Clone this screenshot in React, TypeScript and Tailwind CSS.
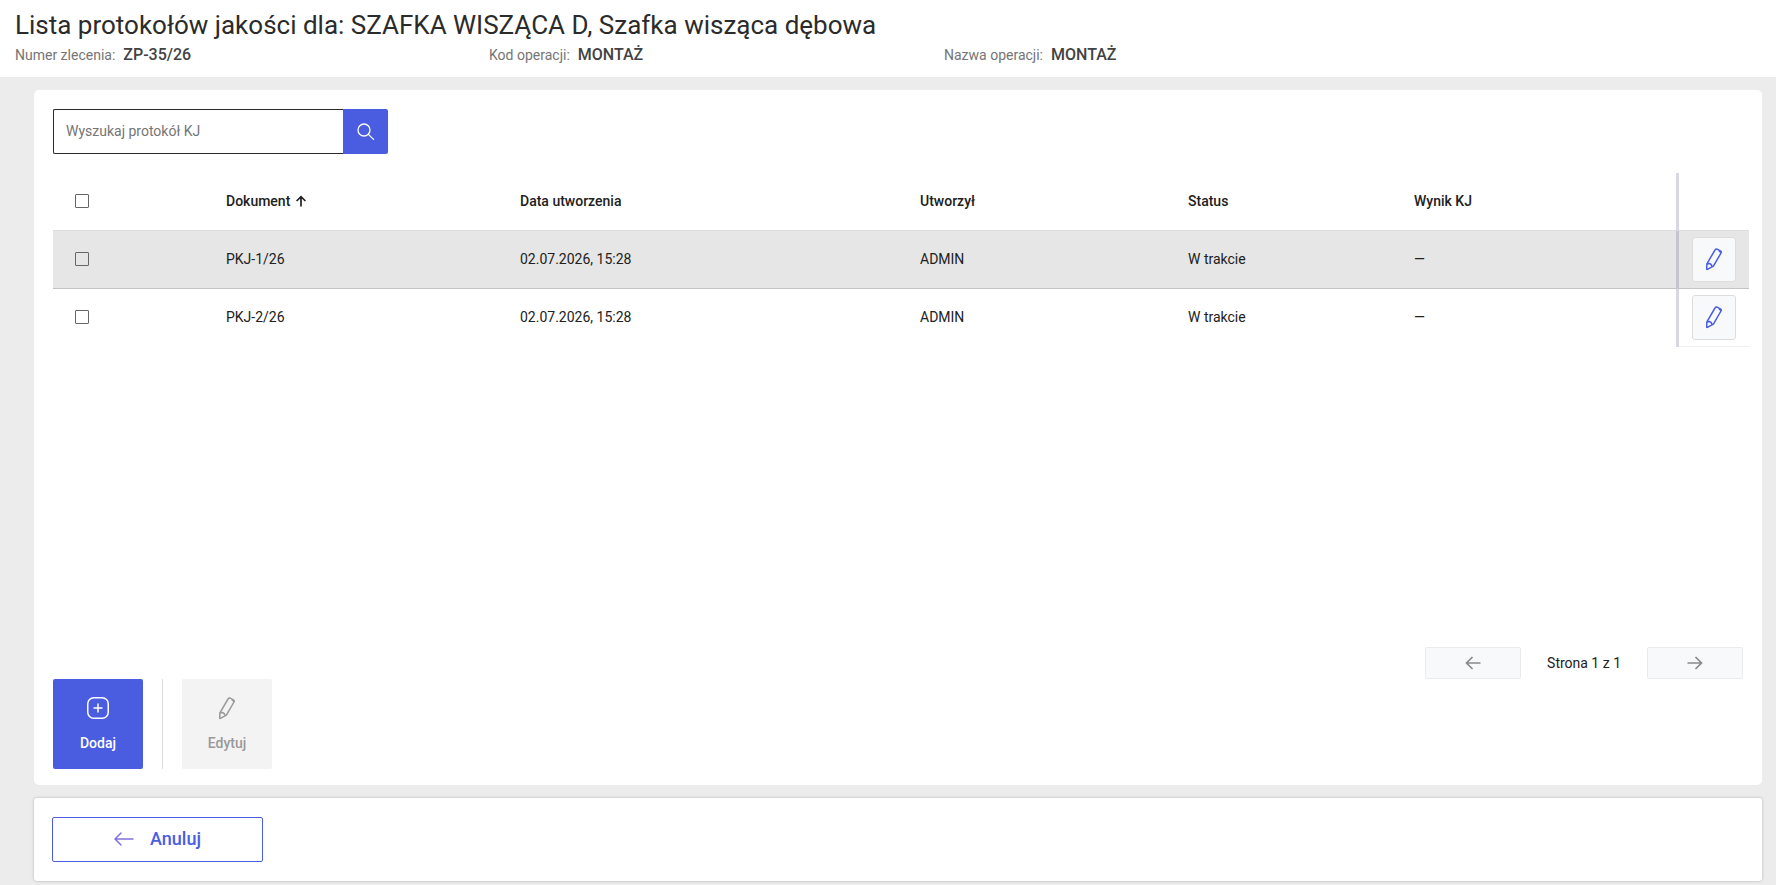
import type { ReactNode } from 'react'

type Protocol = {
  document: string
  createdAt: string
  createdBy: string
  status: string
  result: string
}

const protocols: Protocol[] = [
  { document: 'PKJ-1/26', createdAt: '02.07.2026, 15:28', createdBy: 'ADMIN', status: 'W trakcie', result: '—' },
  { document: 'PKJ-2/26', createdAt: '02.07.2026, 15:28', createdBy: 'ADMIN', status: 'W trakcie', result: '—' },
]

function PencilIcon() {
  return (
    <svg width="24" height="24" viewBox="0 0 24 24" fill="none" stroke="currentColor" strokeWidth="1.5" strokeLinejoin="round" aria-hidden="true">
      <path d="M13 3 Q13.8 1.6 15.2 2.2 L18.3 3.8 Q19.8 4.6 19 6 L11.4 19.2 L5.4 22.4 Q4.7 22.7 4.7 22 L4.9 16.8 Z" />
      <path d="M4.9 17 L7.4 16.6 Q9.6 17 9.9 19.6 M16.8 3.4 L19 5.6" />
    </svg>
  )
}

function PlusIcon() {
  return (
    <svg width="24" height="24" viewBox="0 0 24 24" fill="none" stroke="currentColor" strokeWidth="1.5" aria-hidden="true">
      <rect x="1.75" y="1.75" width="20.5" height="20.5" rx="6" />
      <path d="M12 7.5v9M7.5 12h9" />
    </svg>
  )
}

function SearchIcon() {
  return (
    <svg width="18" height="18" viewBox="0 0 18 18" fill="none" stroke="currentColor" strokeWidth="1.3" strokeLinecap="round" aria-hidden="true">
      <circle cx="7" cy="7" r="6" />
      <path d="M11.4 11.4 L16.6 16.4" />
    </svg>
  )
}

function SortIcon() {
  return (
    <svg width="12" height="12" viewBox="0 0 12 12" fill="none" stroke="currentColor" strokeWidth="1.7" aria-hidden="true">
      <path d="M6 11.5V1.6M1.6 6 L6 1.6 L10.4 6" />
    </svg>
  )
}

function PagerArrow({ direction }: { direction: 'left' | 'right' }) {
  return (
    <svg width="16" height="14" viewBox="0 0 16 14" fill="none" stroke="currentColor" strokeWidth="1.7" aria-hidden="true">
      {direction === 'left' ? <path d="M15.5 7H1.5M7.5 1 L1.5 7 L7.5 13" /> : <path d="M0.5 7H14.5M8.5 1 L14.5 7 L8.5 13" />}
    </svg>
  )
}

function BackIcon() {
  return (
    <svg width="20" height="14" viewBox="0 0 20 14" fill="none" stroke="currentColor" strokeWidth="1.5" strokeLinecap="round" aria-hidden="true">
      <path d="M19 7H1M7 1 L1 7 L7 13" />
    </svg>
  )
}

function HeaderField({ label, value }: { label: string; value: string }) {
  return (
    <div className="flex items-baseline gap-2">
      <dt className="text-[14px] text-[#757575]">{label}</dt>
      <dd className="text-[16px] font-medium text-[#424242]">{value}</dd>
    </div>
  )
}

function Check({ label }: { label: string }) {
  return (
    <input
      type="checkbox"
      aria-label={label}
      className="block size-[14px] appearance-none rounded-[1px] border border-[#666666] checked:bg-[#4a5de1]"
    />
  )
}

function Cell({ children }: { children: ReactNode }) {
  return <td className="px-4">{children}</td>
}

export default function App() {
  return (
    <div className="flex min-h-screen flex-col bg-[#ececec] font-[Roboto,sans-serif] text-[14px] text-[#212121]">
      <header className="bg-white px-[15px] pt-[8px] pb-[9px]">
        <h1 className="text-[26px] leading-[34px] text-[#2b2b2b]">
          Lista protokołów jakości dla: SZAFKA WISZĄCA D, Szafka wisząca dębowa
        </h1>
        <dl className="grid grid-cols-[474fr_455fr_817fr] leading-[26px]">
          <HeaderField label="Numer zlecenia:" value="ZP-35/26" />
          <HeaderField label="Kod operacji:" value="MONTAŻ" />
          <HeaderField label="Nazwa operacji:" value="MONTAŻ" />
        </dl>
      </header>

      <main className="mt-[13px] mr-[14px] ml-[34px] flex flex-1 flex-col rounded-[5px] bg-white pt-[19px] pr-[13px] pb-[16px] pl-[19px]">
        <form className="flex w-[335px]" onSubmit={(e) => e.preventDefault()}>
          <input
            type="text"
            aria-label="Wyszukaj protokół KJ"
            placeholder="Wyszukaj protokół KJ"
            className="h-[45px] min-w-0 flex-1 rounded-l-[2px] border border-r-0 border-[#2b2b2b] px-3 pb-[2px] text-[14px] outline-none placeholder:text-[#757575]"
          />
          <button
            type="submit"
            aria-label="Szukaj"
            className="flex size-[45px] items-center justify-center rounded-r-[2px] bg-[#4a5de1] text-white"
          >
            <SearchIcon />
          </button>
        </form>

        <table className="mt-[19px] w-full table-fixed border-collapse text-left">
          <colgroup>
            <col className="w-[157px]" />
            <col className="w-[294px]" />
            <col className="w-[400px]" />
            <col className="w-[268px]" />
            <col className="w-[226px]" />
            <col className="w-[279px]" />
            <col className="w-[72px]" />
          </colgroup>
          <thead>
            <tr className="h-[57px] [&>th]:font-medium">
              <th className="pl-[22px]">
                <Check label="Zaznacz wszystkie" />
              </th>
              <th className="px-4" aria-sort="ascending">
                <span className="flex items-center gap-[5px]">
                  Dokument <SortIcon />
                </span>
              </th>
              <th className="px-4">Data utworzenia</th>
              <th className="px-4">Utworzył</th>
              <th className="px-4">Status</th>
              <th className="px-4">Wynik KJ</th>
              <th className="border-l-3 border-[#d9d8e0]" />
            </tr>
          </thead>
          <tbody>
            {protocols.map((row, i) => (
              <tr
                key={row.document}
                className={i === 0 ? 'h-[58px] border-t border-b border-t-[#dcdcdc] border-b-[#c4c4c4] bg-[#e6e6e6]' : 'h-[58px]'}
              >
                <td className="pl-[22px]">
                  <Check label={`Zaznacz ${row.document}`} />
                </td>
                <Cell>{row.document}</Cell>
                <Cell>{row.createdAt}</Cell>
                <Cell>{row.createdBy}</Cell>
                <Cell>{row.status}</Cell>
                <Cell>{row.result}</Cell>
                <td
                  className={
                    i === 0
                      ? 'border-l-3 border-l-[#c6c5cd] pl-[13px]'
                      : 'border-b border-l-3 border-b-[#eeeeee] border-l-[#d9d8e0] pl-[13px]'
                  }
                >
                  <button
                    type="button"
                    aria-label={`Edytuj ${row.document}`}
                    className="flex h-[45px] w-[44px] items-center justify-center rounded-[3px] border border-[#dddddd] bg-[#f8f9fb] text-[#4a5de1]"
                  >
                    <PencilIcon />
                  </button>
                </td>
              </tr>
            ))}
          </tbody>
        </table>

        <nav className="mt-auto flex items-center justify-end gap-[26px] pr-[6px]" aria-label="Strony">
          <button
            type="button"
            aria-label="Poprzednia strona"
            disabled
            className="flex h-[32px] w-[96px] items-center justify-center rounded-[2px] border border-[#ebebeb] bg-[#f8f9fb] text-[#8a8a8a]"
          >
            <PagerArrow direction="left" />
          </button>
          <span>Strona 1 z 1</span>
          <button
            type="button"
            aria-label="Następna strona"
            disabled
            className="flex h-[32px] w-[96px] items-center justify-center rounded-[2px] border border-[#ebebeb] bg-[#f8f9fb] text-[#8a8a8a]"
          >
            <PagerArrow direction="right" />
          </button>
        </nav>

        <div className="flex gap-[19px] font-medium">
          <button
            type="button"
            className="flex size-[90px] flex-col items-center gap-[13px] rounded-[2px] bg-[#4a5de1] pt-[17px] text-white"
          >
            <PlusIcon />
            Dodaj
          </button>
          <div className="w-px bg-[#dcdcdc]" />
          <button
            type="button"
            disabled
            className="flex size-[90px] flex-col items-center gap-[13px] rounded-[2px] bg-[#f3f3f3] pt-[17px] text-[#999999]"
          >
            <PencilIcon />
            Edytuj
          </button>
        </div>
      </main>

      <footer className="mt-[13px] mr-[14px] mb-[4px] ml-[34px] rounded-[3px] bg-white px-[18px] py-[19px] shadow-[0_0_3px_rgba(0,0,0,0.25)]">
        <button
          type="button"
          className="flex h-[45px] w-[211px] items-center justify-center gap-4 rounded-[2px] border border-[#4a5de1] pb-[2px] text-[18px] font-medium text-[#4a5de1]"
        >
          <span className="text-[#8271dc]">
            <BackIcon />
          </span>
          Anuluj
        </button>
      </footer>
    </div>
  )
}
